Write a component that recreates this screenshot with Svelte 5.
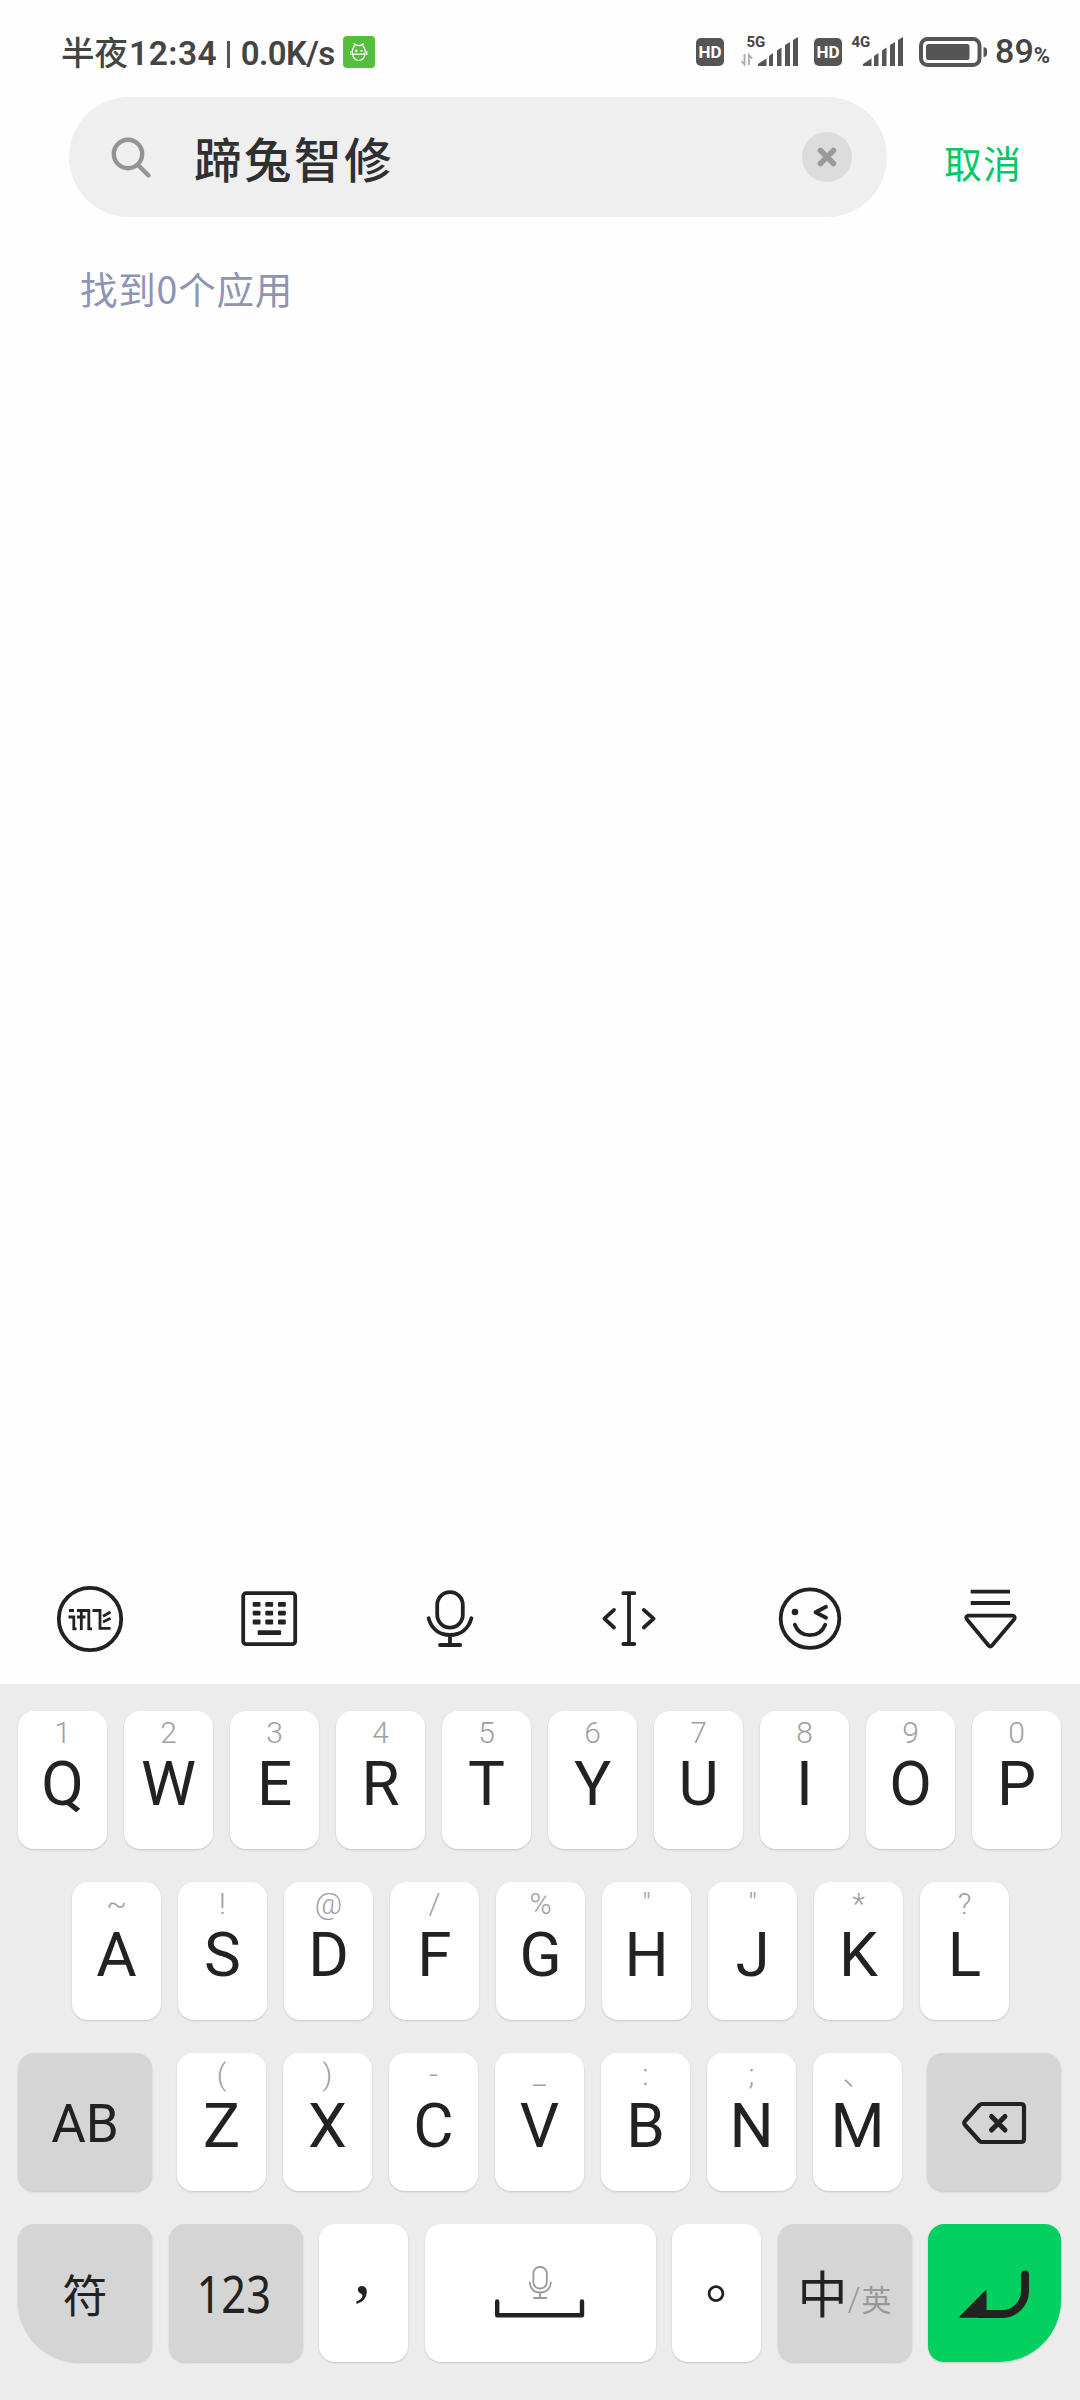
<script>
    let query = "蹄兔智修";
    let count = 0;

    const row1 = [
        ["Q", "1"], ["W", "2"], ["E", "3"], ["R", "4"], ["T", "5"],
        ["Y", "6"], ["U", "7"], ["I", "8"], ["O", "9"], ["P", "0"],
    ];
    const row2 = [
        ["A", "~"], ["S", "!"], ["D", "@"], ["F", "/"], ["G", "%"],
        ["H", '"'], ["J", '"'], ["K", "*"], ["L", "?"],
    ];
    const row3 = [
        ["Z", "("], ["X", ")"], ["C", "-"], ["V", "_"],
        ["B", ":"], ["N", ";"], ["M", "、"],
    ];

    // columns and rows of the dots inside the keyboard icon
    const dotCols = [32.7, 45.3, 58];
    const dotRows = [32, 40.8, 49.6];

    function type(letter) {
        query += letter;
    }

    function clear() {
        query = "";
    }
</script>

<div class="screen">
    <header class="status">
        <div class="status-left">
            <span class="time">半夜<b>12:34</b></span>
            <span class="divider"></span>
            <span class="speed">0.0K/s</span>
            <svg class="app-icon" width="32" height="32" viewBox="0 0 32 32">
                <rect width="32" height="32" rx="4" fill="#55bf3d" />
                <g fill="none" stroke="#fff" stroke-width="1.2">
                    <path d="M9.5 17.5C9 14 9.8 12 11.2 10.8L11.3 7.8L14 9.6C15.3 9.2 16 9.2 17.4 9.6L20 7.8L20.2 10.8C21.8 12.2 22.5 14.5 22 17.5C21.5 22 19.5 24.5 15.8 24.5C12 24.5 9.9 22 9.5 17.5Z" />
                    <path d="M7.8 15V19M23.8 15V19M9 18.2H22.5M12 14.8H14.6M13.3 13.5V16M17.2 14.8H19.8" />
                </g>
            </svg>
        </div>
        <div class="status-right">
            <svg class="hd" width="28" height="28" viewBox="0 0 28 28">
                <rect width="28" height="28" rx="5" fill="#555" />
                <text x="14" y="20" text-anchor="middle" fill="#fff">HD</text>
            </svg>
            <svg class="signal first" width="58" height="46" viewBox="0 -6 58 46">
                <text x="5.5" y="12">5G</text>
                <path d="M3.5 19V29.5L0.5 26M8 30V20L11 23.5" fill="none" stroke="#aaa" stroke-width="1.8" />
                <path d="M17 31V29L25.5 23.5V31ZM28 31V21L32 18V31ZM36 31V15.5L40.5 12.5V31ZM44 31V10L49 7V31ZM52 31V5L57 2V31Z" fill="#555" />
            </svg>
            <svg class="hd second" width="28" height="28" viewBox="0 0 28 28">
                <rect width="28" height="28" rx="5" fill="#555" />
                <text x="14" y="20" text-anchor="middle" fill="#fff">HD</text>
            </svg>
            <svg class="signal last" width="53" height="46" viewBox="0 -6 53 46">
                <text x="0.5" y="12">4G</text>
                <path d="M12 31V29L20.5 23.5V31ZM23 31V21L27.5 18V31ZM31 31V15.5L35.5 12.5V31ZM39 31V10L44 7V31ZM47 31V5L52 2V31Z" fill="#555" />
            </svg>
            <svg class="battery" width="68" height="30" viewBox="0 0 68 30">
                <rect x="2" y="2" width="58.5" height="26" rx="6.5" fill="none" stroke="#555" stroke-width="4" />
                <rect x="7" y="7" width="43.5" height="16" rx="2.5" fill="#555" />
                <path d="M64.5 10Q68 10.5 68 13V17Q68 19.5 64.5 20Z" fill="#555" />
            </svg>
            <span class="level">89<small>%</small></span>
        </div>
    </header>

    <div class="search">
        <div class="field">
            <svg class="magnifier" width="44" height="46" viewBox="0 0 44 46">
                <circle cx="19" cy="20" r="14.2" />
                <path d="M29 31L39.5 41.5" />
            </svg>
            <span class="query">{query}</span>
            <button class="clear" aria-label="清除" on:click={clear}>
                <svg width="50" height="50" viewBox="0 0 50 50">
                    <path d="M18.5 18.5L31.5 31.5M31.5 18.5L18.5 31.5" />
                </svg>
            </button>
        </div>
        <button class="cancel">取消</button>
    </div>

    <p class="result">找到{count}个应用</p>

    <nav class="toolbar">
        <svg viewBox="0 0 100 100">
            <circle cx="50" cy="49" r="31.2" />
            <g class="logo">
                <path d="M29 40.5H34M28.5 47H33.8V58.8H36.5" />
                <path d="M37 40.5H48.8V58.8H52M41.3 40.5V60M37 47H45.5" />
                <path d="M52.5 40.5H60V58.3H70.5M63 46.2L70.5 42M63 52L70.5 48.2" />
            </g>
        </svg>
        <svg viewBox="0 0 100 100">
            <rect x="23.2" y="23.2" width="52" height="51" rx="3" />
            {#each dotRows as y}
                {#each dotCols as x}
                    <rect class="solid" {x} {y} width="7.8" height="4.8" rx="1" />
                {/each}
            {/each}
            <rect class="solid" x="37.7" y="60.3" width="23.4" height="4.8" rx="1" />
        </svg>
        <svg viewBox="0 0 100 100">
            <rect x="37.2" y="22.2" width="25.6" height="35.4" rx="12.8" />
            <path d="M28.6 48.3C31.5 59 39.5 65 50 65S68.5 59 71.4 48.3M50 65V75M40 75H60.2" />
        </svg>
        <svg viewBox="0 0 100 100">
            <path d="M43.3 23.2H54.3M49 23.2V74M43.3 74H54.3" />
            <path d="M34 39.9L24.4 48.7L34 57.5M63.8 39.9L73.6 48.7L63.8 57.5" />
        </svg>
        <svg viewBox="0 0 100 100">
            <circle cx="50" cy="48.6" r="29.3" />
            <circle class="solid" cx="35" cy="42" r="3.3" />
            <path d="M66 36.8L55.5 42.3L66 47.8M34.8 54.8C37.5 61.5 43 65.2 50 65.2S62.5 61.5 65.2 54.8" />
        </svg>
        <svg viewBox="0 0 100 100">
            <path class="bars" d="M30.7 21.7H70M30.7 33H70" />
            <path d="M28.2 45.7H72.8Q76 46.5 74 49.5L52 75.5Q50.3 77.5 48.6 75.5L27 49.5Q25 46.5 28.2 45.7Z" />
        </svg>
    </nav>

    <div class="keyboard">
        <div class="row">
            {#each row1 as [letter, hint]}
                <button class="key" on:click={() => type(letter)}>
                    <span class="hint">{hint}</span>
                    <span class="letter">{letter}</span>
                </button>
            {/each}
        </div>
        <div class="row middle">
            {#each row2 as [letter, hint]}
                <button class="key" on:click={() => type(letter)}>
                    <span class="hint">{hint}</span>
                    <span class="letter">{letter}</span>
                </button>
            {/each}
        </div>
        <div class="row spread">
            <button class="key wide caps">AB</button>
            <div class="letters">
                {#each row3 as [letter, hint]}
                    <button class="key" on:click={() => type(letter)}>
                        <span class="hint">{hint}</span>
                        <span class="letter">{letter}</span>
                    </button>
                {/each}
            </div>
            <button class="key wide" aria-label="删除">
                <svg class="icon" width="134" height="138" viewBox="0 0 134 138">
                    <path d="M55 51H94Q97 51 97 54V86Q97 89 94 89H55Q53.5 89 52.5 88L38.5 72.5Q36 70 38.5 67.5L52.5 52Q53.5 51 55 51Z" stroke-width="4.2" />
                    <path d="M64.5 63.5L78 77M78 63.5L64.5 77" stroke-width="5" />
                </svg>
            </button>
        </div>
        <div class="row spread">
            <button class="key wide symbols">符</button>
            <button class="key wide numbers"><span>123</span></button>
            <button class="key comma"><span>,</span></button>
            <button class="key space" aria-label="空格">
                <svg class="icon" width="231" height="138" viewBox="0 0 231 138">
                    <path d="M72.2 77.5V91.2H157V77.5" stroke-width="4.4" />
                    <g stroke="#999" stroke-width="1.8">
                        <rect x="108.4" y="43" width="13.4" height="21.5" rx="6.2" />
                        <path d="M104.8 58.5C105.3 64.5 108.8 68.5 115.1 68.5S125.3 64.5 125.8 58.5M115.1 68.5V74M109 74H121.5" />
                    </g>
                </svg>
            </button>
            <button class="key stop"><span>。</span></button>
            <button class="key wide lang">中<small><i>/</i>英</small></button>
            <button class="key enter" aria-label="回车">
                <svg class="icon" width="133" height="138" viewBox="0 0 133 138">
                    <path d="M52 90H74A23 23 0 0 0 97 67V50.5" stroke-width="8" />
                    <path class="head" d="M32 93L57.8 67V93Z" stroke-width="1.5" />
                </svg>
            </button>
        </div>
    </div>
</div>

<style>
    :global(body) {
        background: #fefefe;
    }

    .screen {
        width: 1080px;
        height: 2400px;
        display: flex;
        flex-direction: column;
        background: #fefefe;
        font-family: Roboto, "Noto Sans CJK SC", sans-serif;
        color: #222;
        overflow: hidden;
    }

    button {
        border: none;
        padding: 0;
        margin: 0;
        font-family: inherit;
        color: inherit;
        background: none;
    }

    /* status bar */
    .status {
        height: 97px;
        box-sizing: border-box;
        padding: 32px 30px 0 61px;
        display: flex;
        justify-content: space-between;
        color: #444;
    }

    .status-left,
    .status-right {
        display: flex;
        align-items: center;
        height: 40px;
    }

    .time,
    .speed {
        margin-top: 3px;
        font-size: 33.5px;
        line-height: 40px;
        font-weight: 500;
        white-space: nowrap;
    }

    .time b {
        margin-left: 1px;
        font-weight: 600;
        letter-spacing: 0.5px;
    }

    .speed {
        font-size: 33px;
        font-weight: 600;
        letter-spacing: -0.6px;
    }

    .divider {
        width: 2.5px;
        height: 27px;
        margin: 4px 11px 0 10px;
        background: #555;
    }

    .app-icon {
        margin-left: 8px;
    }

    .hd {
        font-size: 17px;
        font-weight: 700;
    }

    .hd.second {
        margin-left: 15px;
    }

    .signal {
        font-size: 15px;
        font-weight: 700;
        fill: #444;
    }

    .signal.first {
        margin-left: 17px;
    }

    .signal.last {
        margin-left: 9px;
    }

    .battery {
        margin-left: 15px;
    }

    .level {
        margin: 3px 0 0 8px;
        font-size: 34px;
        line-height: 40px;
        font-weight: 500;
        white-space: nowrap;
    }

    .level small {
        font-size: 22px;
        font-weight: 700;
    }

    /* search */
    .search {
        display: flex;
        align-items: center;
        padding-left: 69px;
    }

    .field {
        width: 818px;
        height: 120px;
        box-sizing: border-box;
        padding: 0 35px 0 40px;
        display: flex;
        align-items: center;
        border-radius: 60px;
        background: #efefef;
    }

    .magnifier {
        fill: none;
        stroke: #949494;
        stroke-width: 4.4;
        stroke-linecap: round;
    }

    .query {
        flex: 1;
        margin: 10px 0 0 41px;
        font-size: 47.5px;
        line-height: 60px;
        font-weight: 500;
        letter-spacing: 2.5px;
        color: #303030;
    }

    .clear {
        width: 50px;
        height: 50px;
        border-radius: 50%;
        background: #dcdcdc;
    }

    .clear svg {
        display: block;
        stroke: #9a9a9a;
        stroke-width: 5.5;
        stroke-linecap: round;
    }

    .cancel {
        margin: 15px 0 0 57px;
        font-size: 38px;
        line-height: 50px;
        letter-spacing: 1px;
        color: #04c864;
    }

    .result {
        margin: 45px 0 0 80px;
        font-size: 37.5px;
        line-height: 52px;
        letter-spacing: 0.8px;
        color: #8e95b3;
        font-family: "Noto Sans CJK SC", sans-serif;
    }

    /* input method toolbar */
    .toolbar {
        margin-top: auto;
        height: 114px;
        flex: none;
        display: flex;
        justify-content: space-around;
    }

    .toolbar svg {
        width: 100px;
        height: 100px;
        margin: 0 40px;
        fill: none;
        stroke: #222;
        stroke-width: 3.8;
        stroke-linecap: round;
        stroke-linejoin: round;
    }

    .toolbar .logo {
        stroke-width: 2.8;
        stroke-linecap: butt;
        stroke-linejoin: miter;
    }

    .toolbar .bars {
        stroke-linecap: butt;
    }

    .toolbar .solid {
        fill: #222;
        stroke: none;
    }

    /* keyboard */
    .keyboard {
        flex: none;
        height: 716px;
        box-sizing: border-box;
        padding: 27px 19px 0 18px;
        display: flex;
        flex-direction: column;
        gap: 33px;
        background: #ececec;
    }

    .row,
    .letters {
        display: flex;
        justify-content: center;
        gap: 17px;
    }

    .middle {
        padding-left: 2px;
    }

    .spread {
        justify-content: space-between;
        gap: 0;
    }

    .key {
        width: 89px;
        height: 138px;
        flex: none;
        display: flex;
        flex-direction: column;
        align-items: center;
        border-radius: 16px;
        background: #fff;
        box-shadow: 0 1px 2px rgba(0, 0, 0, 0.16);
    }

    .hint {
        height: 36px;
        margin-top: 4px;
        font-size: 30px;
        line-height: 36px;
        font-weight: 300;
        color: #a0a0a0;
    }

    .letter {
        font-size: 62px;
        line-height: 66px;
    }

    .wide {
        width: 134px;
        flex-direction: row;
        justify-content: center;
        background: #d5d5d5;
    }

    .caps {
        box-sizing: border-box;
        padding-top: 4px;
        font-size: 53px;
    }

    .symbols {
        box-sizing: border-box;
        font-size: 45px;
        border-bottom-left-radius: 62px;
    }

    .numbers {
        box-sizing: border-box;
        padding-right: 3px;
        font-family: "Noto Sans", sans-serif;
        font-size: 51px;
    }

    .numbers span {
        transform: scaleX(0.85);
    }

    .comma,
    .stop {
        justify-content: center;
    }

    .comma span {
        font-family: "Liberation Serif", serif;
        font-size: 70px;
        line-height: 74px;
        transform: translate(-1px, -23px);
    }

    .stop span {
        font-size: 54px;
        line-height: 60px;
        transform: translate(16px, -12px);
    }

    .space {
        width: 231px;
    }

    .lang {
        padding-bottom: 4px;
        box-sizing: border-box;
        font-size: 50px;
    }

    .lang small {
        margin-top: 13px;
        font-size: 30px;
        color: #999;
    }

    .lang i {
        margin-right: 1px;
        font-style: normal;
        font-size: 33px;
        font-weight: 300;
    }

    .enter {
        width: 133px;
        border-bottom-right-radius: 62px;
        background: #04d062;
    }

    .icon {
        display: block;
        fill: none;
        stroke: #222;
        stroke-linecap: round;
        stroke-linejoin: round;
    }

    .icon .head {
        fill: #222;
    }
</style>
